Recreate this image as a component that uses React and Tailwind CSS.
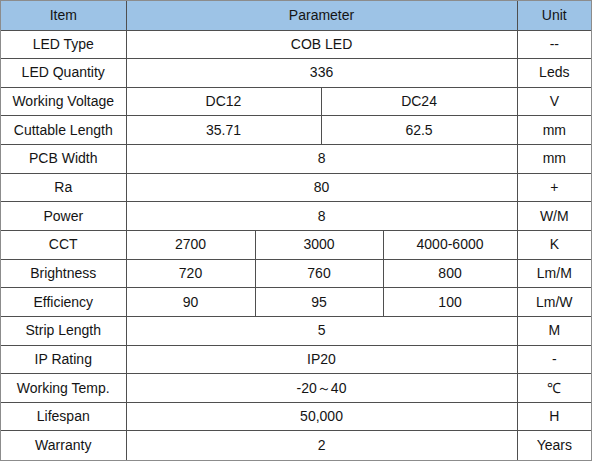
const rows = [
  { item: 'LED Type', cells: [['COB LED', 4]], unit: '--' },
  { item: 'LED Quantity', cells: [['336', 4]], unit: 'Leds' },
  { item: 'Working Voltage', cells: [['DC12', 2], ['DC24', 2]], unit: 'V' },
  { item: 'Cuttable Length', cells: [['35.71', 2], ['62.5', 2]], unit: 'mm' },
  { item: 'PCB Width', cells: [['8', 4]], unit: 'mm' },
  { item: 'Ra', cells: [['80', 4]], unit: '+' },
  { item: 'Power', cells: [['8', 4]], unit: 'W/M' },
  { item: 'CCT', cells: [['2700', 1], ['3000', 2], ['4000-6000', 1]], unit: 'K' },
  { item: 'Brightness', cells: [['720', 1], ['760', 2], ['800', 1]], unit: 'Lm/M' },
  { item: 'Efficiency', cells: [['90', 1], ['95', 2], ['100', 1]], unit: 'Lm/W' },
  { item: 'Strip Length', cells: [['5', 4]], unit: 'M' },
  { item: 'IP Rating', cells: [['IP20', 4]], unit: '-' },
  { item: 'Working Temp.', cells: [['-20～40', 4]], unit: '℃' },
  { item: 'Lifespan', cells: [['50,000', 4]], unit: 'H' },
  { item: 'Warranty', cells: [['2', 4]], unit: 'Years' },
]

const cell = 'border-l border-t border-[#4f4f4f] text-center align-middle p-0'

export default function App() {
  return (
    <div className="w-[594px] h-[462px] bg-white">
      <div className="w-[592px] border border-[#8c8c8c] font-['Liberation_Sans',Arial,sans-serif] text-[14px] text-[#141414]">
        <table className="w-full table-fixed border-collapse">
          <colgroup>
            <col className="w-[125px]" />
            <col className="w-[129px]" />
            <col className="w-[66px]" />
            <col className="w-[62px]" />
            <col className="w-[134px]" />
            <col className="w-[74px]" />
          </colgroup>
          <thead>
            <tr className="h-[29px] bg-[#9dc3e6]">
              <th className="font-normal text-center p-0 border-l-0">Item</th>
              <th colSpan={4} className="font-normal text-center p-0 border-l border-[#4f4f4f]">Parameter</th>
              <th className="font-normal text-center p-0 border-l border-[#4f4f4f]">Unit</th>
            </tr>
          </thead>
          <tbody>
            {rows.map((r) => (
              <tr key={r.item} className="h-[28.65px]">
                <td className={`${cell} border-l-0`}>{r.item}</td>
                {r.cells.map(([v, span], i) => (
                  <td key={i} colSpan={span} className={cell}>{v}</td>
                ))}
                <td className={cell}>{r.unit}</td>
              </tr>
            ))}
          </tbody>
        </table>
      </div>
    </div>
  )
}
